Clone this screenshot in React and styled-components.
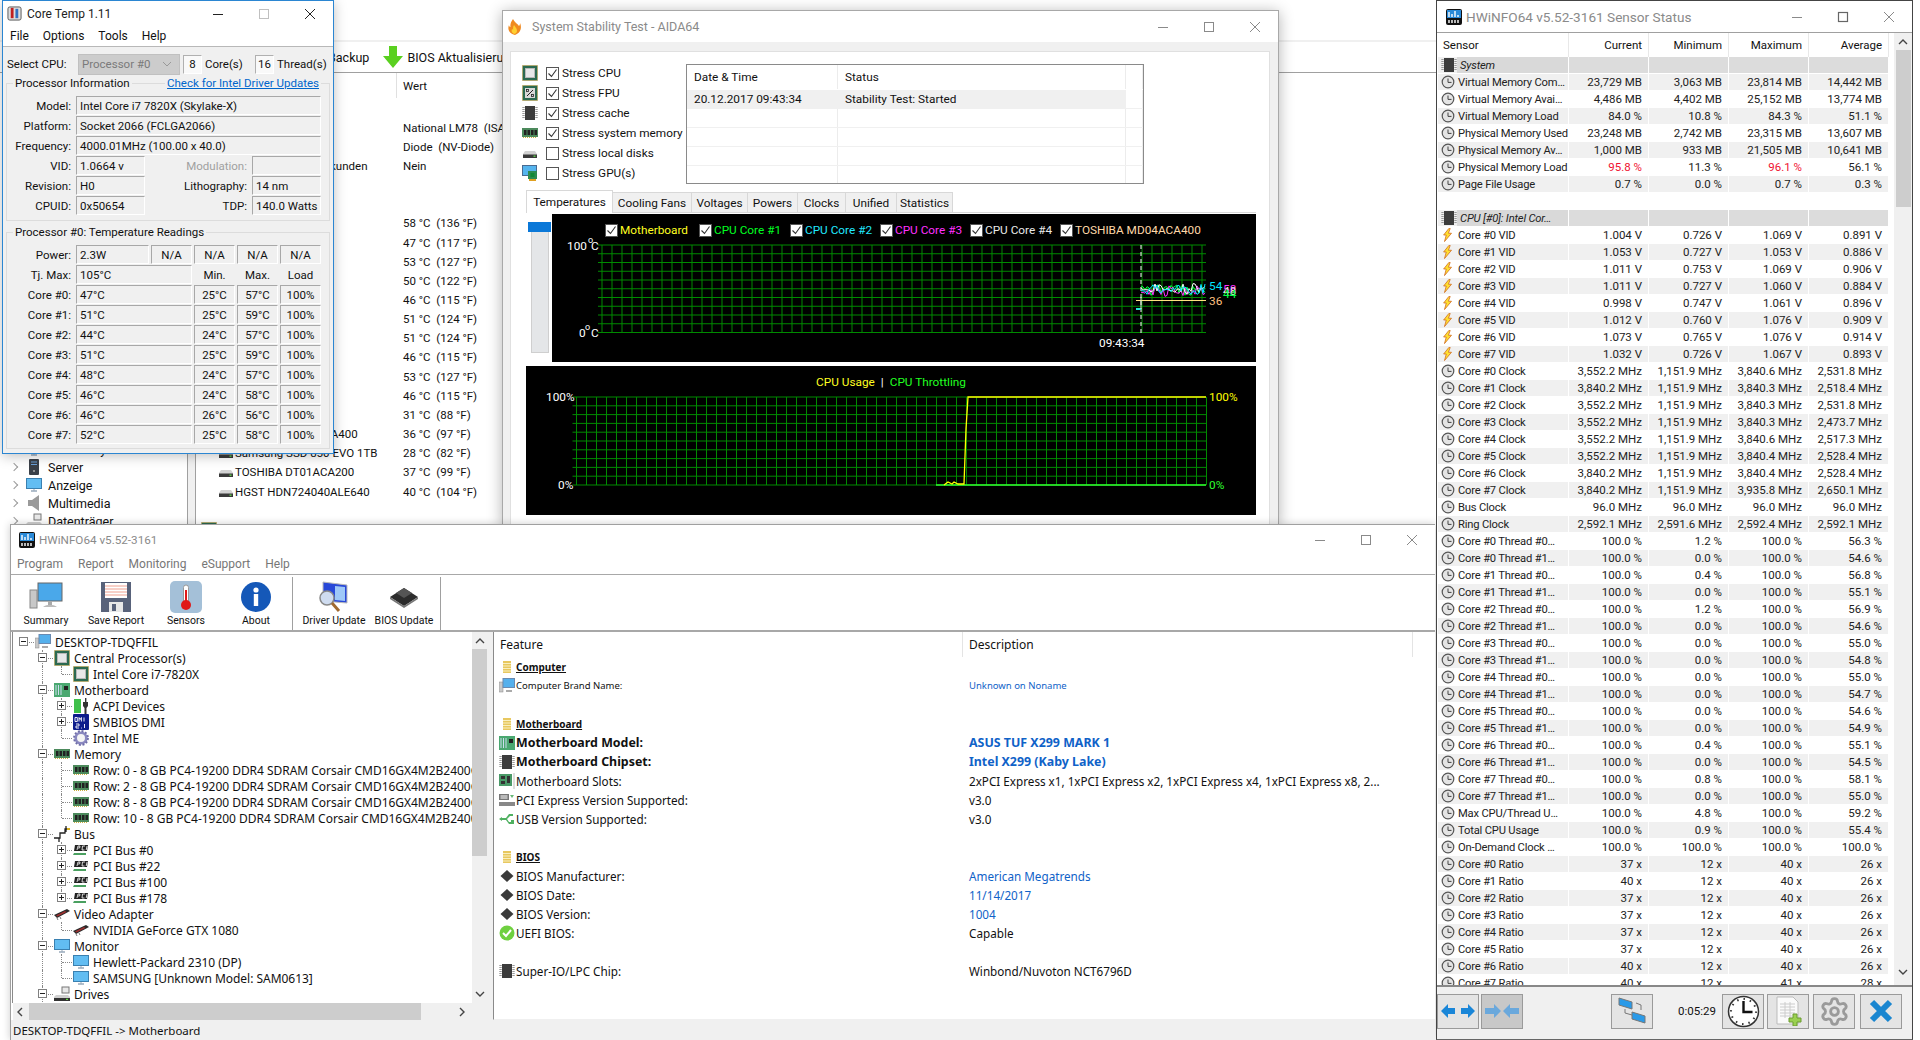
import React from 'react'
import styled, { createGlobalStyle } from 'styled-components'
import { Settings } from 'lucide-react'

const GlobalStyle = createGlobalStyle`
html, body { margin: 0; padding: 0; background: #fff; }
body { font-family: Roboto, "Noto Sans", "Liberation Sans", sans-serif; font-size: 12px; color: #111; }
* { box-sizing: border-box; }
`

const Desktop = styled.div`
position: relative;
width: 1920px;
height: 1040px;
overflow: hidden;
background: #fff;
`

const Win = styled.div`
position: absolute;
display: flex;
flex-direction: column;
background: #fff;
overflow: hidden;
`

const TitleBar = styled.div`
display: flex;
align-items: center;
flex: none;
height: ${p => p.$h}px;
padding-left: ${p => p.$pad}px;
gap: ${p => p.$gap || 6}px;
font-size: ${p => p.$size || 12}px;
background: #fff;
color: ${p => p.$active ? '#222' : '#8a8a8a'};
`

const TitleText = styled.span`
flex: 1;
white-space: nowrap;
`

const Controls = styled.div`
display: flex;
flex: none;
align-items: center;
`

const ControlBtn = styled.svg`
display: block;
width: 46px;
height: 12px;
`

function WinControls({ color = '#222', dim = '#222', maxw = 1 }) {
  return (
    <Controls>
      <ControlBtn viewBox="0 0 46 12"><path d="M18 6.5h10" stroke={color} fill="none" /></ControlBtn>
      <ControlBtn viewBox="0 0 46 12"><rect x="18.5" y="1.5" width="9" height="9" stroke={dim} fill="none" strokeWidth={maxw} /></ControlBtn>
      <ControlBtn viewBox="0 0 46 12"><path d="M18 1l10 10M28 1L18 11" stroke={color} fill="none" /></ControlBtn>
    </Controls>
  )
}

/* small icons */
const IcoSvg = styled.svg`
flex: none;
display: block;
`
const Ico = ({ s = 16, children, vb = '0 0 16 16' }) => (
  <IcoSvg width={s} height={s} viewBox={vb}>{children}</IcoSvg>
)
const CpuIcon = ({ s }) => (
  <Ico s={s}>
    <rect x="0.5" y="0.5" width="15" height="15" fill="#2c6a50" stroke="#c9a040" strokeDasharray="1 1" />
    <rect x="3.5" y="3.5" width="9" height="9" fill="#e8e8e8" stroke="#b8b8b8" />
  </Ico>
)
const FpuIcon = () => (
  <Ico>
    <rect x="0.5" y="0.5" width="15" height="15" fill="#2c6a50" stroke="#c9a040" strokeDasharray="1 1" />
    <rect x="3" y="3" width="10" height="10" fill="#d8d8d8" />
    <path d="M5 11l6-6" stroke="#222" />
    <rect x="4.5" y="4.5" width="2" height="2" fill="none" stroke="#222" strokeWidth=".8" />
    <rect x="9.5" y="9.5" width="2" height="2" fill="none" stroke="#222" strokeWidth=".8" />
  </Ico>
)
const ChipIcon = () => (
  <Ico>
    <rect x="3" y="1" width="10" height="14" fill="#3c3c3c" />
    <path d="M1.5 2v12M14.5 2v12" stroke="#999" strokeWidth="2.4" strokeDasharray="1 1" />
  </Ico>
)
const RamIcon = () => (
  <Ico>
    <rect x="0" y="3" width="16" height="9" fill="#4c8a5c" />
    <path d="M2 5h2.5v5H2zM5.5 5H8v5H5.5zM9 5h2.5v5H9zM12.5 5H15v5h-2.5z" fill="#222" />
    <path d="M1 12.5h14" stroke="#c9b040" strokeDasharray="1 1" />
  </Ico>
)
const DiskIcon = () => (
  <Ico>
    <path d="M3 6h10l2 3v3H1V9z" fill="#d2d2d2" />
    <rect x="1" y="9.5" width="14" height="3.5" fill="#3a3a3a" />
    <rect x="11.5" y="10.5" width="2" height="1.4" fill="#5ed04a" />
  </Ico>
)
const GpuMonitorIcon = () => (
  <Ico>
    <rect x="0.5" y="0.5" width="14" height="10" fill="#55b4ee" stroke="#4a6a90" />
    <rect x="6" y="6" width="9" height="8" fill="#2d8a50" />
    <rect x="8.5" y="8" width="4" height="4" fill="#183" />
    <rect x="7" y="14" width="7" height="2" fill="#e0a020" />
  </Ico>
)
const ClockIcon = () => (
  <Ico s={14} vb="0 0 14 14">
    <circle cx="7" cy="7" r="5.8" fill="#e4e4e4" stroke="#555" strokeWidth="1.2" />
    <path d="M7 3.5V7.4h3.5" stroke="#444" fill="none" />
  </Ico>
)
const BoltIcon = () => (
  <Ico s={14} vb="2 0 12 16">
    <path d="M9 0.5L3 8h3l-2 7.5L12 6H8.5l2-5.5z" fill="#ffe030" stroke="#d06a20" strokeWidth=".9" />
  </Ico>
)
const MonitorIcon = () => (
  <Ico>
    <rect x="0.5" y="1.5" width="15" height="10" fill="#62bdf2" stroke="#3a80b0" />
    <path d="M5 14h6" stroke="#9ab" strokeWidth="1.5" />
    <path d="M8 12v2" stroke="#9ab" />
  </Ico>
)
const PcIcon = () => (
  <Ico>
    <rect x="0" y="4" width="4" height="10" fill="#c8c8c8" stroke="#888" strokeWidth=".5" />
    <rect x="4" y="0.5" width="11.5" height="9" fill="#55b0ec" stroke="#6a8ab0" />
    <path d="M7 13h6" stroke="#aaa" strokeWidth="2" />
  </Ico>
)
const BoardIcon = () => (
  <Ico>
    <rect x="0" y="1" width="16" height="14" fill="#4aa870" />
    <path d="M2 3v10M4.5 3v10M7 3v10" stroke="#cde" />
    <rect x="10" y="4" width="4" height="4" fill="#222" />
  </Ico>
)
const AcpiIcon = () => (
  <Ico>
    <rect x="1" y="1" width="7" height="14" fill="#3fc04a" />
    <rect x="12" y="0" width="1.4" height="4" fill="#333" />
    <path d="M10 4h5v4l-1.5 2v6h-2v-6L10 8z" fill="#333" />
  </Ico>
)
const DmiIcon = () => (
  <Ico>
    <rect width="16" height="16" rx="1" fill="#0c1c8c" />
    <path d="M2 3.5h2.3v4H2zM6 7.5v-4l1.2 2 1.2-2v4M11 3.5v4" stroke="#fff" fill="none" strokeWidth=".9" />
    <path d="M3 10h3M6 10v2H3v2h3M8 14h.8M11.5 10v4" stroke="#fff" fill="none" strokeWidth=".9" />
  </Ico>
)
const GearIcon = () => (
  <Ico>
    <circle cx="8" cy="8" r="5.3" fill="#f4f4f4" stroke="#8a88c0" strokeWidth="2.6" />
    <circle cx="8" cy="8" r="7" fill="none" stroke="#6f6da8" strokeWidth="1.8" strokeDasharray="2 1.7" />
  </Ico>
)
const BusIcon = () => (
  <Ico>
    <path d="M0 12h6V7h5V3h4M5 12v4M12 0v6" stroke="#222" fill="none" strokeWidth="1.3" />
    <rect x="13" y="2" width="3" height="2" fill="#d8b020" />
  </Ico>
)
const PciIcon = () => (
  <Ico>
    <path d="M2 3h13l-1 6H1z" fill="#222" />
    <path d="M1 11h12v2H0z" fill="#4aa060" />
    <path d="M4 8l1-4h2l-.4 2H5M12 4H9.500L9 8h2.500M14 4l-.8 4" stroke="#fff" fill="none" strokeWidth=".8" />
  </Ico>
)
const GpuIcon = () => (
  <Ico>
    <path d="M0 9l13-6 3 2-13 7z" fill="#2a2a2a" />
    <path d="M2 9.500l9-4.500 1.500 1-9 4.500z" fill="#a03030" />
    <path d="M3 12l1 2M6 11l1 2" stroke="#777" />
  </Ico>
)
const DriveGroupIcon = () => (
  <Ico>
    <rect x="8" y="1" width="7" height="6" fill="#e8e8e8" stroke="#777" />
    <path d="M2 9h12l2 2v3H0v-3z" fill="#d0d0d0" />
    <rect x="0" y="12" width="16" height="3" fill="#333" />
    <rect x="12" y="12.800" width="2" height="1.200" fill="#6d4" />
  </Ico>
)
const ServerIcon = () => (
  <Ico>
    <rect x="3" y="0" width="10" height="16" rx="1" fill="#3a4048" />
    <path d="M5 3h6M5 5.500h6" stroke="#6aa0d8" />
    <circle cx="8" cy="12" r="1" fill="#aaa" />
  </Ico>
)
const SpeakerIcon = () => (
  <Ico><path d="M2 5h4l7-5v16l-7-5H2z" fill="#9a9a9a" /></Ico>
)
const NotesIcon = () => (
  <Ico s={14} vb="0 0 14 14">
    <rect x="3" y="1" width="8" height="12" fill="#e8c860" />
    <path d="M3 3.500h8M3 6h8M3 8.500h8M3 11h8" stroke="#f8f0c0" />
  </Ico>
)
const DiamondIcon = () => (
  <Ico s={14} vb="0 0 14 14"><path d="M7 1l6.500 6L7 13 .5 7z" fill="#3a3a3a" /></Ico>
)
const OkIcon = () => (
  <Ico>
    <circle cx="8" cy="8" r="7.500" fill="#6fd040" />
    <path d="M4 8l3 3 5-6" stroke="#fff" strokeWidth="2" fill="none" />
  </Ico>
)
const SlotsIcon = () => (
  <Ico>
    <rect x="0" y="1" width="13" height="12" fill="#4a9a68" />
    <path d="M2 3h4v3H2zM8 3h3v7H8zM2 8h4v3H2z" fill="#333" />
    <path d="M15 0v16" stroke="#bbb" />
  </Ico>
)
const PcieIcon = () => (
  <Ico>
    <rect x="0" y="2" width="10" height="6" fill="#777" />
    <path d="M1.500 4h7M1.500 6h7" stroke="#fff" />
    <rect x="0" y="10" width="16" height="4" fill="#888" />
    <path d="M11 3h4l-2 3z" fill="#6ab878" />
  </Ico>
)
const UsbIcon = () => (
  <Ico><path d="M0 8l3-2v1h4l3-4h4v2h-3L8 8l2 3h2V9h3v4h-5L7 9H3v1z" fill="#4fb060" /></Ico>
)
const FlameIcon = () => (
  <Ico>
    <path d="M7 0c1 3 5 5 6 7 1-1 1-2 1-3 2 4 1 10-5 12-5-1-8-5-6-10 0 1 .5 2 1.500 2C4 5 5 3 7 0z" fill="#f08a20" />
    <path d="M8 6c1 2 3 3 3 6 0 2-2 3-3 3-2-1-3-3-2-5 .5.500 1 .5 1.200.5C7 9 7 8 8 6z" fill="#ffd030" />
  </Ico>
)
const InfoAppIcon = () => (
  <Ico>
    <rect x="0" y="0" width="16" height="16" rx="2" fill="#111" />
    <rect x="1" y="1" width="14" height="8" fill="#2a8ad8" />
    <path d="M3 3v5M6 5v3M9 2v6M12 6v2" stroke="#fff" strokeWidth="1.400" />
    <path d="M3 11v3M6 11v3M9 11v3M12 11v3" stroke="#fff" strokeWidth="1.400" />
  </Ico>
)

/* window behind everything, only partly visible */
const BackWindow = styled(Win)`
left: 0;
top: 0;
width: 1436px;
height: 530px;
font-size: 12.5px;
`

const BackTitle = styled.div`
flex: none;
height: 42px;
border-bottom: 2px solid #f0f0f0;
`

const BackToolbar = styled.div`
flex: none;
display: flex;
align-items: center;
height: 31px;
padding-left: 328px;
gap: 13px;
white-space: nowrap;
border-bottom: 1px solid #a0a0a0;
`

const ToolText = styled.span`
margin-left: ${p => p.$ml || 0}px;
`

const BackBody = styled.div`
flex: 1;
display: flex;
min-height: 0;
`

const BackTree = styled.div`
flex: none;
width: 196px;
padding-top: 367px;
border-right: 1px solid #a0a0a0;
box-shadow: inset -7px 0 0 #f0f0f0, inset -8px 0 0 #a0a0a0;
`

const BackTreeRow = styled.div`
display: flex;
align-items: center;
height: 18px;
padding-left: 11px;
gap: 6px;
`

const Chevron = styled.span`
flex: none;
width: 6px;
height: 6px;
margin-right: 3px;
border-top: 1.5px solid #9a9a9a;
border-right: 1.5px solid #9a9a9a;
transform: rotate(45deg);
`

const BackList = styled.div`
flex: 1;
min-width: 0;
font-size: 11.5px;
`

const BackHead = styled.div`
display: flex;
align-items: center;
height: 25px;
padding-left: 200px;
margin-bottom: 20px;
`

const HeadSep = styled.span`
width: 1px;
height: 100%;
margin-right: 6px;
background: #e0e0e0;
`

const BackRow = styled.div`
display: flex;
align-items: center;
height: 19.17px;
white-space: pre;
`

const BackName = styled.div`
display: flex;
align-items: center;
gap: 1px;
flex: none;
width: 207px;
padding-left: ${p => p.$pad}px;
`

function BackWindowView() {
  const rows = [
    ['', 'National LM78  (ISA 290h)'],
    ['', 'Diode  (NV-Diode)'],
    ['Ausschalten in Sekunden', 'Nein', 43],
    ['', ''],
    ['', ''],
    ['', '58 °C  (136 °F)'],
    ['', '47 °C  (117 °F)'],
    ['', '53 °C  (127 °F)'],
    ['', '50 °C  (122 °F)'],
    ['', '46 °C  (115 °F)'],
    ['', '51 °C  (124 °F)'],
    ['', '51 °C  (124 °F)'],
    ['', '46 °C  (115 °F)'],
    ['', '53 °C  (127 °F)'],
    ['', '46 °C  (115 °F)'],
    ['', '31 °C  (88 °F)'],
    ['TOSHIBA MD04ACA400', '36 °C  (97 °F)', 22, true],
    ['Samsung SSD 850 EVO 1TB', '28 °C  (82 °F)', 22, true],
    ['TOSHIBA DT01ACA200', '37 °C  (99 °F)', 22, true],
    ['HGST HDN724040ALE640', '40 °C  (104 °F)', 22, true],
  ]
  return (
    <BackWindow>
      <BackTitle />
      <BackToolbar>
        <span>Backup</span>
        <Ico s={22} vb="0 0 22 22"><path d="M7 0h8v10h6L11 22 1 10h6z" fill="#5ad020" /></Ico>
        <ToolText $ml={-10}>BIOS Aktualisierung</ToolText>
      </BackToolbar>
      <BackBody>
        <BackTree>
          {[['Betriebssystem', <MonitorIcon key="a" />], ['Server', <ServerIcon key="b" />], ['Anzeige', <MonitorIcon key="c" />], ['Multimedia', <SpeakerIcon key="d" />], ['Datenträger', <DriveGroupIcon key="e" />]].map(([t, icon]) => (
            <BackTreeRow key={t}><Chevron />{icon}<span>{t}</span></BackTreeRow>
          ))}
        </BackTree>
        <BackList>
          <BackHead><HeadSep /><span>Wert</span></BackHead>
          {rows.map((r, i) => (
            <BackRow key={i}>
              <BackName $pad={r[2] || 0}>{r[3] && <DiskIcon />}{r[0]}</BackName>
              <span>{r[1]}</span>
            </BackRow>
          ))}
          <BackRow />
          <BackRow><BackName $pad={5}><CpuIcon />Kühlluft</BackName></BackRow>
        </BackList>
      </BackBody>
    </BackWindow>
  )
}

/* Core Temp */
const CoreWindow = styled(Win)`
left: 2px;
top: 0;
width: 332px;
height: 454px;
border: 1px solid #2b86d2;
box-shadow: 0 2px 12px rgba(0,0,0,.25);
font-size: 11.5px;
`

const MenuBar = styled.div`
display: flex;
flex: none;
align-items: center;
height: ${p => p.$h}px;
padding-left: ${p => p.$pad}px;
gap: ${p => p.$gap}px;
color: ${p => p.$color || '#111'};
background: #fff;
border-bottom: 1px solid ${p => p.$line || '#b8b8b8'};
font-size: 12px;
`

const CoreBody = styled.div`
flex: 1;
display: flex;
flex-direction: column;
padding: 6px 3px 0 3px;
background: #f0f0f0;
`

const SelectRow = styled.div`
display: flex;
align-items: center;
height: 22px;
padding-left: 1px;
margin-bottom: 8px;
white-space: nowrap;
`

const SelectLabel = styled.span`
flex: none;
width: ${p => p.$w}px;
`

const FakeSelect = styled.div`
display: flex;
align-items: center;
justify-content: space-between;
flex: none;
width: 102px;
height: 21px;
padding: 0 8px 0 3px;
background: #cccccc;
border: 1px solid #c0c0c0;
color: #7a7a7a;
`

const CountBox = styled.div`
display: flex;
align-items: center;
justify-content: center;
flex: none;
width: 19px;
height: 19px;
margin-left: ${p => p.$ml}px;
margin-right: 3px;
background: #f9f9f9;
border: 1px solid #b0b0b0;
border-right-color: #fff;
border-bottom-color: #fff;
`

const GroupBox = styled.div`
margin-bottom: ${p => p.$mb}px;
padding: 0 7px 0 0;
height: ${p => p.$h}px;
border: 1px solid #dcdcdc;
`

const GroupHead = styled.div`
display: flex;
justify-content: space-between;
align-items: center;
height: 16px;
margin: -9px 1px 5px 6px;
white-space: nowrap;
`

const GroupLabel = styled.span`
padding: 0 2px;
background: #f0f0f0;
`

const GroupLink = styled.a`
padding: 0 2px;
background: #f0f0f0;
color: #0066cc;
text-decoration: underline;
`

const InfoGrid = styled.div`
display: grid;
grid-template-columns: 64px 69px 97px 69px;
column-gap: 5px;
row-gap: 1px;
`

const TempGrid = styled.div`
display: grid;
grid-template-columns: 67px 73px 41px 41px 41px 41px;
column-gap: 2px;
row-gap: 1px;
`

const FieldLabel = styled.div`
display: flex;
align-items: center;
justify-content: flex-end;
height: 19px;
padding-right: ${p => p.$pr || 0}px;
white-space: nowrap;
color: ${p => p.$dim ? '#a0a0a0' : '#111'};
`

const Field = styled.div`
display: flex;
align-items: center;
justify-content: ${p => p.$center ? 'center' : 'flex-start'};
grid-column: span ${p => p.$span || 1};
height: 19px;
padding-left: ${p => p.$center ? 0 : 3}px;
background: #f0f0f0;
border: 1px solid;
border-color: #a8a8a8 #fff #fff #a8a8a8;
white-space: nowrap;
`

const Plain = styled.div`
display: flex;
align-items: center;
justify-content: center;
height: 19px;
`

function CoreTempView() {
  const cores = [
    ['47', '25', '57'], ['51', '25', '59'], ['44', '24', '57'], ['51', '25', '59'],
    ['48', '24', '57'], ['46', '24', '58'], ['46', '26', '56'], ['52', '25', '58'],
  ]
  return (
    <CoreWindow>
      <TitleBar $h={25} $pad={4} $gap={5} $active $size={12}>
        <Ico s={15}>
          <rect x="1" y="1" width="14" height="14" rx="2" fill="#ddd" stroke="#555" />
          <rect x="4" y="2" width="3" height="11" fill="#c02020" />
          <rect x="9" y="3" width="3" height="10" fill="#3070c0" />
        </Ico>
        <TitleText>Core Temp 1.11</TitleText>
        <WinControls color="#222" dim="#c0c0c0" />
      </TitleBar>
      <MenuBar $h={21} $pad={7} $gap={14}>
        <span>File</span><span>Options</span><span>Tools</span><span>Help</span>
      </MenuBar>
      <CoreBody>
        <SelectRow>
          <SelectLabel $w={71}>Select CPU:</SelectLabel>
          <FakeSelect>Processor #0<svg width="8" height="5" viewBox="0 0 8 5"><path d="M0 0l4 4 4-4" stroke="#999" fill="none" /></svg></FakeSelect>
          <CountBox $ml={3}>8</CountBox><SelectLabel $w={47}>Core(s)</SelectLabel>
          <CountBox $ml={3}>16</CountBox><span>Thread(s)</span>
        </SelectRow>
        <GroupBox $h={138} $mb={11}>
          <GroupHead><GroupLabel>Processor Information</GroupLabel><GroupLink>Check for Intel Driver Updates</GroupLink></GroupHead>
          <InfoGrid>
            <FieldLabel>Model:</FieldLabel><Field $span={3}>Intel Core i7 7820X (Skylake-X)</Field>
            <FieldLabel>Platform:</FieldLabel><Field $span={3}>Socket 2066 (FCLGA2066)</Field>
            <FieldLabel>Frequency:</FieldLabel><Field $span={3}>4000.01MHz (100.00 x 40.0)</Field>
            <FieldLabel>VID:</FieldLabel><Field>1.0664 v</Field><FieldLabel $dim>Modulation:</FieldLabel><Field />
            <FieldLabel>Revision:</FieldLabel><Field>H0</Field><FieldLabel>Lithography:</FieldLabel><Field>14 nm</Field>
            <FieldLabel>CPUID:</FieldLabel><Field>0x50654</Field><FieldLabel>TDP:</FieldLabel><Field>140.0 Watts</Field>
          </InfoGrid>
        </GroupBox>
        <GroupBox $h={217} $mb={0}>
          <GroupHead><GroupLabel>Processor #0: Temperature Readings</GroupLabel></GroupHead>
          <TempGrid>
            <FieldLabel $pr={3}>Power:</FieldLabel><Field>2.3W</Field><Field $center>N/A</Field><Field $center>N/A</Field><Field $center>N/A</Field><Field $center>N/A</Field>
            <FieldLabel $pr={3}>Tj. Max:</FieldLabel><Field $span={2}>105°C</Field><Plain>Min.</Plain><Plain>Max.</Plain><Plain>Load</Plain>
            {cores.map((c, i) => (
              <React.Fragment key={i}>
                <FieldLabel $pr={3}>Core #{i}:</FieldLabel>
                <Field $span={2}>{c[0]}°C</Field>
                <Field $center>{c[1]}°C</Field>
                <Field $center>{c[2]}°C</Field>
                <Field $center>100%</Field>
              </React.Fragment>
            ))}
          </TempGrid>
        </GroupBox>
      </CoreBody>
    </CoreWindow>
  )
}

/* AIDA64 stability test */
const StabilityWindow = styled(Win)`
left: 502px;
top: 10px;
width: 777px;
height: 516px;
border: 1px solid #a8a8a8;
box-shadow: 0 2px 14px rgba(0,0,0,.3);
font-size: 11.8px;
`

const StabilityBody = styled.div`
flex: 1;
padding: 9px 8px 0 7px;
background: #f0f0f0;
`

const StabilityPanel = styled.div`
height: 480px;
padding: 11px 14px 0 11px;
background: #fff;
border: 1px solid #e0e0e0;
`

const TopRow = styled.div`
display: flex;
height: 128px;
`

const StressList = styled.div`
flex: none;
width: 164px;
`

const StressRow = styled.div`
display: flex;
align-items: center;
height: 20px;
gap: 8px;
white-space: nowrap;
`

const Check = styled.span`
display: flex;
align-items: center;
justify-content: center;
flex: none;
width: 13px;
height: 13px;
margin-right: ${p => p.$mr ?? -5}px;
border: 1px solid #555;
background: #fff;
`

const CheckMark = ({ color = '#333' }) => (
  <svg width="11" height="11" viewBox="0 0 11 11"><path d="M1.500 5.500l3 3 5-7" stroke={color} strokeWidth="1.100" fill="none" /></svg>
)

const LogTable = styled.div`
width: 458px;
height: 120px;
margin-top: 1px;
border: 1px solid #8a8a8a;
overflow: hidden;
`

const LogRow = styled.div`
display: grid;
grid-template-columns: 151px 288px 1fr;
height: ${p => p.$head ? 25 : 19}px;
border-bottom: 1px solid ${p => p.$head ? 'transparent' : '#f0f0f0'};
`

const LogCell = styled.div`
display: flex;
align-items: center;
padding-left: 7px;
white-space: nowrap;
border-right: 1px solid ${p => p.$sel ? '#f0f0f0' : '#ececec'};
background: ${p => p.$sel ? '#f0f0f0' : 'transparent'};
`

const Tabs = styled.div`
display: flex;
align-items: flex-end;
height: 22px;
margin-left: 4px;
width: 730px;
border-bottom: 1px solid #d8d8d8;
`

const Tab = styled.div`
display: flex;
align-items: center;
justify-content: center;
flex: none;
width: ${p => p.$w}px;
height: ${p => p.$active ? 23 : 20}px;
margin-bottom: ${p => p.$active ? -1 : 0}px;
background: ${p => p.$active ? '#fff' : '#f0f0f0'};
border: 1px solid #d8d8d8;
border-left-width: ${p => p.$active ? 1 : 0}px;
border-bottom-width: 0;
white-space: nowrap;
`

const GraphRow = styled.div`
display: flex;
height: 148px;
margin: 1px 0 4px 4px;
width: 730px;
`

const TempScroll = styled.div`
position: relative;
flex: none;
width: 26px;
margin-top: 8px;
`

const ScrollTrack = styled.div`
width: 18px;
height: 131px;
margin-left: 5px;
background: #e4e6e8;
border: 1px solid #cfcfcf;
`

const ScrollMarker = styled.div`
position: absolute;
left: 2px;
top: 0;
width: 23px;
height: 10px;
background: #0a78d8;
`

const BlackPanel = styled.div`
flex: 1;
display: flex;
flex-direction: column;
background: #000;
color: #fff;
min-width: 0;
`

const Legend = styled.div`
display: flex;
align-items: center;
flex: none;
height: 22px;
margin: 5px 0 -4px 0;
padding-left: 53px;
`

const LegendItem = styled.div`
display: flex;
align-items: center;
flex: none;
gap: 2px;
width: ${p => p.$w}px;
color: ${p => p.$color};
white-space: nowrap;
`

const CpuPanel = styled(BlackPanel)`
width: 730px;
height: 149px;
margin-left: 4px;
flex: none;
`

const CpuLegend = styled.div`
display: flex;
justify-content: center;
align-items: center;
flex: none;
gap: 6px;
height: 22px;
margin: 5px 0 -4px 0;
white-space: nowrap;
`

const Tone = styled.span`
color: ${p => p.$color};
`

const ChartSvg = styled.svg`
display: block;
flex: none;
overflow: visible;
`

const ChartText = styled.text`
font-family: Roboto, sans-serif;
font-size: ${p => p.$size || 11.8}px;
fill: ${p => p.$fill || '#fff'};
`

function gridPath(x0, x1, dx, y0, y1, rows) {
  let d = ''
  for (let x = x0; x <= x1 + 0.5; x += dx) d += `M${x} ${y0}V${y1}`
  for (let i = 0; i <= rows; i++) {
    const y = y0 + (y1 - y0) * i / rows
    d += `M${x0 - 4} ${y}H${x1}`
  }
  return d
}

function trace(seed, base, amp) {
  let pts = []
  for (let x = 589; x <= 654; x += 2) {
    const n = Math.sin(x * 12.9898 + seed * 78.233) * 43758.5453
    pts.push(`${x},${(base + (n - Math.floor(n) - 0.5) * amp).toFixed(1)}`)
  }
  return pts.join(' ')
}

function TempChart() {
  return (
    <ChartSvg width="704" height="126" viewBox="0 0 704 126">
      <path d={gridPath(50, 654, 10, 8, 95.500, 10)} stroke="#008a00" fill="none" />
      <ChartText x="15" y="13">100</ChartText>
      <ChartText x="36" y="6" $size={9}>o</ChartText>
      <ChartText x="39" y="13">C</ChartText>
      <ChartText x="27" y="100">0</ChartText>
      <ChartText x="33" y="93" $size={9}>o</ChartText>
      <ChartText x="39" y="100">C</ChartText>
      <ChartText x="547" y="110">09:43:34</ChartText>
      <path d="M589 8V96" stroke="#fff" strokeDasharray="4 3" />
      <polyline points={trace(1, 53, 11)} stroke="#00ff40" fill="none" />
      <polyline points={trace(2, 54, 11)} stroke="#ff30ff" fill="none" />
      <polyline points={trace(3, 52, 11)} stroke="#ffffff" fill="none" />
      <polyline points={trace(4, 52, 11)} stroke="#00e8ff" fill="none" />
      <path d="M584 63.500H654" stroke="#ffe080" />
      <path d="M584 72H589" stroke="#20e8d8" strokeWidth="2" />
      <path d="M589 72V60" stroke="#d0f0d0" />
      <ChartText x="657" y="53" $fill="#00e8ff">54</ChartText>
      <ChartText x="671" y="56" $fill="#ff30ff">58</ChartText>
      <ChartText x="671" y="58" $fill="#e0e0e0">48</ChartText>
      <ChartText x="671" y="61" $fill="#00ff40">44</ChartText>
      <ChartText x="657" y="68" $fill="#ffc080">36</ChartText>
    </ChartSvg>
  )
}

function CpuChart() {
  return (
    <ChartSvg width="730" height="127" viewBox="0 0 730 127">
      <path d={gridPath(50.500, 680, 10, 8, 96, 10)} stroke="#008a00" fill="none" />
      <path d="M410 96H680" stroke="#30ff30" strokeWidth="1.500" />
      <path d="M418 96L422 93 426 95 428 93 432 95H438L440 40 442 8H680" stroke="#ffff00" fill="none" strokeWidth="1.300" />
      <ChartText x="20" y="12">100%</ChartText>
      <ChartText x="32" y="100">0%</ChartText>
      <ChartText x="683" y="12" $fill="#ffff00">100%</ChartText>
      <ChartText x="683" y="100" $fill="#30ff30">0%</ChartText>
    </ChartSvg>
  )
}

function StabilityView() {
  const stress = [
    [<CpuIcon key="1" />, 'Stress CPU', true],
    [<FpuIcon key="2" />, 'Stress FPU', true],
    [<ChipIcon key="3" />, 'Stress cache', true],
    [<RamIcon key="4" />, 'Stress system memory', true],
    [<DiskIcon key="5" />, 'Stress local disks', false],
    [<GpuMonitorIcon key="6" />, 'Stress GPU(s)', false],
  ]
  const tabs = [['Temperatures', 87, true], ['Cooling Fans', 79], ['Voltages', 56], ['Powers', 50], ['Clocks', 48], ['Unified', 51], ['Statistics', 56]]
  const legend = [['Motherboard', '#ffff20', 94], ['CPU Core #1', '#00ff20', 91], ['CPU Core #2', '#20e8ff', 90], ['CPU Core #3', '#ff30ff', 90], ['CPU Core #4', '#e8e8e8', 90], ['TOSHIBA MD04ACA400', '#ffd8a8', 140]]
  return (
    <StabilityWindow>
      <TitleBar $h={31} $pad={3} $gap={10} $size={12.5}>
        <FlameIcon />
        <TitleText>System Stability Test - AIDA64</TitleText>
        <WinControls color="#8a8a8a" dim="#8a8a8a" />
      </TitleBar>
      <StabilityBody>
        <StabilityPanel>
          <TopRow>
            <StressList>
              {stress.map(([icon, label, on]) => (
                <StressRow key={label}>{icon}<Check>{on && <CheckMark />}</Check><span>{label}</span></StressRow>
              ))}
            </StressList>
            <LogTable>
              <LogRow $head><LogCell>Date &amp; Time</LogCell><LogCell>Status</LogCell><LogCell /></LogRow>
              <LogRow><LogCell $sel>20.12.2017 09:43:34</LogCell><LogCell $sel>Stability Test: Started</LogCell><LogCell /></LogRow>
              <LogRow><LogCell /><LogCell /><LogCell /></LogRow>
              <LogRow><LogCell /><LogCell /><LogCell /></LogRow>
              <LogRow><LogCell /><LogCell /><LogCell /></LogRow>
              <LogRow><LogCell /><LogCell /><LogCell /></LogRow>
            </LogTable>
          </TopRow>
          <Tabs>
            {tabs.map(([t, w, a]) => <Tab key={t} $w={w} $active={a}>{t}</Tab>)}
          </Tabs>
          <GraphRow>
            <TempScroll><ScrollTrack /><ScrollMarker /></TempScroll>
            <BlackPanel>
              <Legend>
                {legend.map(([t, c, w]) => (
                  <LegendItem key={t} $w={w} $color={c}><Check $mr={0}><CheckMark /></Check>{t}</LegendItem>
                ))}
              </Legend>
              <TempChart />
            </BlackPanel>
          </GraphRow>
          <CpuPanel>
            <CpuLegend><Tone $color="#ffff20">CPU Usage</Tone><Tone $color="#fff">|</Tone><Tone $color="#20ff20">CPU Throttling</Tone></CpuLegend>
            <CpuChart />
          </CpuPanel>
        </StabilityPanel>
      </StabilityBody>
    </StabilityWindow>
  )
}

/* HWiNFO main window */
const InfoWindow = styled(Win)`
left: 10px;
top: 524px;
width: 1425px;
height: 516px;
border-top: 1px solid #a0a0a0;
border-left: 1px solid #a0a0a0;
box-shadow: 0 0 8px rgba(0,0,0,.2);
`

const Toolbar = styled.div`
display: flex;
flex: none;
height: 57px;
background: #fff;
border-bottom: 2px solid #a8a8a8;
`

const ToolButton = styled.div`
display: flex;
flex-direction: column;
align-items: center;
justify-content: flex-end;
flex: none;
width: 70px;
padding-bottom: 3px;
gap: 1px;
font-size: 10.5px;
white-space: nowrap;
`

const ToolSep = styled.div`
flex: none;
width: 1px;
margin: 2px ${p => p.$mr || 0}px 0 1px;
background: #a0a0a0;
`

const InfoBody = styled.div`
flex: 1;
display: flex;
min-height: 0;
`

const TreeColumn = styled.div`
flex: none;
display: flex;
flex-direction: column;
width: 476px;
padding-left: 1px;
`

const TreeMain = styled.div`
flex: 1;
display: flex;
min-height: 0;
border-left: 1px solid #8a8a8a;
`

const TreeList = styled.div`
flex: 1;
min-width: 0;
overflow: hidden;
padding-top: 2px;
font-family: "Noto Sans", sans-serif;
`

const TreeRowBox = styled.div`
position: relative;
display: flex;
align-items: center;
gap: 4px;
height: 16px;
padding-left: ${p => 22 + p.$d * 19}px;
font-size: 12px;
letter-spacing: -0.03px;
white-space: nowrap;
`

const Toggle = styled.span`
position: absolute;
left: ${p => p.$x}px;
top: 3px;
width: 9px;
height: 9px;
border: 1px solid #808080;
background: #fff;
z-index: 1;
&::before {
  content: '';
  position: absolute;
  left: 1px;
  top: 3px;
  width: 5px;
  height: 1px;
  background: #222;
}
&::after {
  content: '';
  display: ${p => p.$plus ? 'block' : 'none'};
  position: absolute;
  left: 3px;
  top: 1px;
  width: 1px;
  height: 5px;
  background: #222;
}
`

const GuideV = styled.span`
position: absolute;
left: ${p => p.$x}px;
top: 0;
height: ${p => p.$half ? 8 : 16}px;
border-left: 1px dotted #888;
`

const GuideH = styled.span`
position: absolute;
left: ${p => p.$x}px;
top: 8px;
width: ${p => p.$w}px;
border-top: 1px dotted #888;
`

const VScroll = styled.div`
flex: none;
display: flex;
flex-direction: column;
align-items: center;
width: ${p => p.$w}px;
background: #f0f0f0;
`

const ScrollArrow = styled.svg`
flex: none;
display: block;
width: 10px;
height: 6px;
margin: ${p => p.$m};
`

const VThumb = styled.div`
flex: none;
width: ${p => p.$w}px;
height: ${p => p.$h}px;
background: #cdcdcd;
`

const VSpace = styled.div`
flex: 1;
`

const HScroll = styled.div`
flex: none;
display: flex;
align-items: center;
height: 17px;
margin-left: 1px;
background: #f0f0f0;
`

const HThumb = styled.div`
flex: none;
width: 392px;
height: 100%;
margin: 0 34px 0 6px;
background: #cdcdcd;
`

const ArrowSvg = styled.svg`
flex: none;
margin-left: 4px;
`

const ArrowLR = ({ d }) => (
  <ArrowSvg width="6" height="10" viewBox="0 0 6 10"><path d={d} stroke="#444" strokeWidth="1.400" fill="none" /></ArrowSvg>
)

const Splitter = styled.div`
flex: none;
width: 6px;
background: #f0f0f0;
`

const DetailPane = styled.div`
flex: 1;
min-width: 0;
background: #fff;
border-left: 1px solid #8a8a8a;
border-bottom: 1px solid #f0f0f0;
font-family: "Noto Sans", sans-serif;
`

const DetailHead = styled.div`
display: grid;
grid-template-columns: 469px 450px 1fr;
height: 25px;
`

const DetailHeadCell = styled.div`
display: flex;
align-items: center;
padding-left: 6px;
border-right: 1px solid #e4e4e4;
`

const DetailRow = styled.div`
display: grid;
grid-template-columns: 470px 1fr;
height: 19px;
padding-left: 5px;
align-items: center;
white-space: nowrap;
font-size: ${p => p.$size}px;
font-weight: ${p => p.$bold ? 700 : 400};
`

const DetailName = styled.div`
display: flex;
align-items: center;
gap: 1px;
`

const NameText = styled.span`
text-decoration: ${p => p.$under ? 'underline' : 'none'};
`

const IconSlot = styled.span`
display: flex;
justify-content: center;
flex: none;
width: 16px;
`

const DetailValue = styled.div`
color: ${p => p.$blue ? '#0f62c8' : '#111'};
`

const StatusBar = styled.div`
flex: none;
display: flex;
align-items: center;
height: 20px;
padding-left: 2px;
background: #f0f0f0;
font-family: "Noto Sans", sans-serif;
font-size: 11.5px;
`

const Big = styled.div`
display: flex;
align-items: center;
justify-content: center;
height: 33px;
`

const PcBig = () => (
  <Ico s={34} vb="0 0 34 34">
    <rect x="1" y="10" width="7" height="18" fill="#c8c8c8" stroke="#888" />
    <rect x="9" y="3" width="24" height="18" fill="#4aa8ea" stroke="#666" />
    <path d="M14 27c4-3 10-3 14 0z" fill="#bbb" />
    <rect x="19" y="21" width="4" height="4" fill="#aaa" />
  </Ico>
)
const Floppy = () => (
  <Ico s={32} vb="0 0 32 32">
    <path d="M1 1h30v30H1z" fill="#58627a" />
    <rect x="5" y="2" width="22" height="15" fill="#fff" />
    <path d="M5 5h22M5 8h22M5 11h22M5 14h22" stroke="#f0a090" />
    <rect x="9" y="21" width="14" height="10" fill="#e8e8e8" />
    <rect x="12" y="23" width="4" height="7" fill="#58627a" />
  </Ico>
)
const Thermo = () => (
  <Ico s={32} vb="0 0 32 32">
    <rect width="32" height="32" rx="5" fill="#a4c0d8" />
    <rect x="13.500" y="4" width="5" height="19" rx="2.500" fill="#fff" stroke="#999" />
    <rect x="15" y="9" width="2" height="14" fill="#e01818" />
    <circle cx="16" cy="24" r="5" fill="#e01818" />
  </Ico>
)
const InfoBall = () => (
  <Ico s={30} vb="0 0 30 30">
    <circle cx="15" cy="15" r="15" fill="#1558b8" />
    <circle cx="15" cy="8" r="2.600" fill="#fff" />
    <rect x="12.800" y="12" width="4.400" height="12" fill="#fff" />
  </Ico>
)
const DriverBig = () => (
  <Ico s={33} vb="0 0 33 33">
    <path d="M5 2l24 3v18l-24-2z" fill="#2848d8" stroke="#bbb" />
    <path d="M17 6l10 1v14l-10-1z" fill="#9ec8f8" />
    <circle cx="9" cy="18" r="7" fill="#cfdcf0" stroke="#888" strokeWidth="1.500" />
    <path d="M14 23l7 8" stroke="#a06a30" strokeWidth="3" />
  </Ico>
)
const BiosBig = () => (
  <Ico s={30} vb="0 0 30 30">
    <path d="M15 6l14 9-14 9L1 15z" fill="#2c2c2c" />
    <path d="M15 6l8 5-8 5-8-5z" fill="#555" />
    <path d="M1 15v2l14 9 14-9v-2l-14 9z" fill="#777" />
  </Ico>
)

function InfoView() {
  const r = (d, text, icon, toggle, last) => ({ d, text, icon, toggle, last })
  const tree = [
    r(0, 'DESKTOP-TDQFFIL', <PcIcon />, '-'),
    r(1, 'Central Processor(s)', <CpuIcon />, '-'),
    r(2, 'Intel Core i7-7820X', <CpuIcon />, null, true),
    r(1, 'Motherboard', <BoardIcon />, '-'),
    r(2, 'ACPI Devices', <AcpiIcon />, '+'),
    r(2, 'SMBIOS DMI', <DmiIcon />, '+'),
    r(2, 'Intel ME', <GearIcon />, null, true),
    r(1, 'Memory', <RamIcon />, '-'),
    r(2, 'Row: 0 - 8 GB PC4-19200 DDR4 SDRAM Corsair CMD16GX4M2B2400C14', <RamIcon />),
    r(2, 'Row: 2 - 8 GB PC4-19200 DDR4 SDRAM Corsair CMD16GX4M2B2400C14', <RamIcon />),
    r(2, 'Row: 8 - 8 GB PC4-19200 DDR4 SDRAM Corsair CMD16GX4M2B2400C14', <RamIcon />),
    r(2, 'Row: 10 - 8 GB PC4-19200 DDR4 SDRAM Corsair CMD16GX4M2B2400C14', <RamIcon />, null, true),
    r(1, 'Bus', <BusIcon />, '-'),
    r(2, 'PCI Bus #0', <PciIcon />, '+'),
    r(2, 'PCI Bus #22', <PciIcon />, '+'),
    r(2, 'PCI Bus #100', <PciIcon />, '+'),
    r(2, 'PCI Bus #178', <PciIcon />, '+', true),
    r(1, 'Video Adapter', <GpuIcon />, '-'),
    r(2, 'NVIDIA GeForce GTX 1080', <GpuIcon />, null, true),
    r(1, 'Monitor', <MonitorIcon />, '-'),
    r(2, 'Hewlett-Packard 2310 (DP)', <MonitorIcon />),
    r(2, 'SAMSUNG [Unknown Model: SAM0613]', <MonitorIcon />, null, true),
    r(1, 'Drives', <DriveGroupIcon />, '-'),
  ]
  const details = [
    { name: 'Computer', icon: <NotesIcon />, size: 10, bold: true, under: true },
    { name: 'Computer Brand Name:', icon: <PcIcon />, value: 'Unknown on Noname', blue: true, size: 9.5 },
    {},
    { name: 'Motherboard', icon: <NotesIcon />, size: 10, bold: true, under: true },
    { name: 'Motherboard Model:', icon: <BoardIcon />, value: 'ASUS TUF X299 MARK 1', blue: true, size: 12.4, bold: true },
    { name: 'Motherboard Chipset:', icon: <ChipIcon />, value: 'Intel X299 (Kaby Lake)', blue: true, size: 12.4, bold: true },
    { name: 'Motherboard Slots:', icon: <SlotsIcon />, value: '2xPCI Express x1, 1xPCI Express x2, 1xPCI Express x4, 1xPCI Express x8, 2...', size: 11.7 },
    { name: 'PCI Express Version Supported:', icon: <PcieIcon />, value: 'v3.0', size: 11.7 },
    { name: 'USB Version Supported:', icon: <UsbIcon />, value: 'v3.0', size: 11.7 },
    {},
    { name: 'BIOS', icon: <NotesIcon />, size: 10, bold: true, under: true },
    { name: 'BIOS Manufacturer:', icon: <DiamondIcon />, value: 'American Megatrends', blue: true, size: 11.7 },
    { name: 'BIOS Date:', icon: <DiamondIcon />, value: '11/14/2017', blue: true, size: 11.7 },
    { name: 'BIOS Version:', icon: <DiamondIcon />, value: '1004', blue: true, size: 11.7 },
    { name: 'UEFI BIOS:', icon: <OkIcon />, value: 'Capable', size: 11.7 },
    {},
    { name: 'Super-IO/LPC Chip:', icon: <ChipIcon />, value: 'Winbond/Nuvoton NCT6796D', size: 11.7 },
  ]
  return (
    <InfoWindow>
      <TitleBar $h={29} $pad={8} $gap={4} $size={11.7}>
        <InfoAppIcon />
        <TitleText>HWiNFO64 v5.52-3161</TitleText>
        <WinControls color="#8a8a8a" dim="#8a8a8a" />
      </TitleBar>
      <MenuBar $h={21} $pad={6} $gap={15} $color="#777" $line="#a8a8a8">
        <span>Program</span><span>Report</span><span>Monitoring</span><span>eSupport</span><span>Help</span>
      </MenuBar>
      <Toolbar>
        <ToolButton><Big><PcBig /></Big>Summary</ToolButton>
        <ToolButton><Big><Floppy /></Big>Save Report</ToolButton>
        <ToolButton><Big><Thermo /></Big>Sensors</ToolButton>
        <ToolButton><Big><InfoBall /></Big>About</ToolButton>
        <ToolSep $mr={6} />
        <ToolButton><Big><DriverBig /></Big>Driver Update</ToolButton>
        <ToolButton><Big><BiosBig /></Big>BIOS Update</ToolButton>
        <ToolSep />
      </Toolbar>
      <InfoBody>
        <TreeColumn>
          <TreeMain>
            <TreeList>
              {tree.map((t, i) => (
                <TreeRowBox key={i} $d={t.d}>
                  {i > 0 && <GuideV $x={t.d === 0 ? 10 : 29} />}
                  {t.d === 2 && <GuideV $x={48} $half={t.last} />}
                  {t.d === 1 && <GuideH $x={30} $w={10} />}
                  {t.d === 2 && <GuideH $x={49} $w={10} />}
                  {t.d === 0 && <GuideH $x={11} $w={10} />}
                  {t.toggle && <Toggle $x={[6, 25, 44][t.d]} $plus={t.toggle === '+'} />}
                  {t.icon}
                  <span>{t.text}</span>
                </TreeRowBox>
              ))}
            </TreeList>
            <VScroll $w={15}>
              <ScrollArrow viewBox="0 0 10 6" $m="6px 0 5px"><path d="M1 5l4-4 4 4" stroke="#444" strokeWidth="1.400" fill="none" /></ScrollArrow>
              <VThumb $w={15} $h={207} />
              <VSpace />
              <ScrollArrow viewBox="0 0 10 6" $m="0 0 6px"><path d="M1 1l4 4 4-4" stroke="#444" strokeWidth="1.400" fill="none" /></ScrollArrow>
            </VScroll>
          </TreeMain>
          <HScroll>
            <ArrowLR d="M5 1L1 5l4 4" />
            <HThumb />
            <ArrowLR d="M1 1l4 4-4 4" />
          </HScroll>
        </TreeColumn>
        <Splitter />
        <DetailPane>
          <DetailHead>
            <DetailHeadCell>Feature</DetailHeadCell>
            <DetailHeadCell>Description</DetailHeadCell>
          </DetailHead>
          {details.map((d, i) => (
            <DetailRow key={i} $size={d.size || 12} $bold={d.bold}>
              {d.name ? <DetailName><IconSlot>{d.icon}</IconSlot><NameText $under={d.under}>{d.name}</NameText></DetailName> : <span />}
              <DetailValue $blue={d.blue}>{d.value}</DetailValue>
            </DetailRow>
          ))}
        </DetailPane>
      </InfoBody>
      <StatusBar>DESKTOP-TDQFFIL -&gt; Motherboard</StatusBar>
    </InfoWindow>
  )
}

/* HWiNFO sensors window */
const SensorWindow = styled(Win)`
left: 1436px;
top: 0;
width: 477px;
height: 1040px;
border: 1px solid #444;
border-bottom-color: #666;
font-size: 11.5px;
`

const SensorBody = styled.div`
flex: 1;
display: flex;
min-height: 0;
border-top: 1px solid #a0a0a0;
`

const SensorTable = styled.div`
flex: 1;
min-width: 0;
overflow: hidden;
`

const SensorHeadRow = styled.div`
display: grid;
grid-template-columns: 132px repeat(4, 80px);
height: 24px;
`

const SensorHeadCell = styled.div`
display: flex;
align-items: center;
justify-content: ${p => p.$left ? 'flex-start' : 'flex-end'};
padding: ${p => p.$left ? '0 0 0 6px' : '0 6px 0 0'};
border-right: 1px solid #e8e8e8;
`

const SensorRowBox = styled.div`
display: grid;
grid-template-columns: 132px repeat(4, 80px);
height: 17px;
`

const SensorCell = styled.div`
display: flex;
align-items: center;
justify-content: flex-end;
height: 16px;
padding-right: 6px;
margin-right: 1px;
white-space: nowrap;
color: ${p => p.$red ? '#f01030' : '#222'};
background: ${p => p.$bg};
`

const SensorNameCell = styled.div`
display: flex;
align-items: center;
gap: 3px;
height: 16px;
margin-left: 1px;
margin-right: 1px;
padding-left: 3px;
white-space: nowrap;
overflow: hidden;
font-size: 11.2px;
letter-spacing: -0.18px;
color: #222;
background: ${p => p.$bg};
`

const GroupName = styled.span`
flex: 1;
align-self: stretch;
display: flex;
align-items: center;
padding-left: 3px;
margin-left: -3px;
font-style: italic;
background: #d9d9d9;
`

const BottomBar = styled.div`
flex: none;
display: flex;
align-items: center;
height: 54px;
padding: 0 0 4px 0;
background: #f0f0f0;
border-top: 2px solid #888;
`

const ActionBtn = styled.div`
display: flex;
align-items: center;
justify-content: center;
flex: none;
width: 42px;
height: 35px;
margin-left: ${p => p.$ml || 0}px;
background: ${p => p.$on ? '#c8c8c8' : '#e4e4e4'};
border: 1px solid #9a9a9a;
color: #9a9a9a;
`

const Timer = styled.span`
flex: none;
width: 44px;
margin-left: 25px;
white-space: nowrap;
`

const clockRow = (n, a, b, c, d) => ({ n, v: [a, b, c, d], icon: 'clock' })
const vid = (n, a, b, c, d) => ({ n, v: [`${a} V`, `${b} V`, `${c} V`, `${d} V`], icon: 'bolt' })
const mhz = (n, a, b, c, d) => ({ n, v: [`${a} MHz`, `${b} MHz`, `${c} MHz`, `${d} MHz`], icon: 'clock' })

const threadData = [
  ['0 Thread #0', '1.2', '56.3'], ['0 Thread #1', '0.0', '54.6'], ['1 Thread #0', '0.4', '56.8'], ['1 Thread #1', '0.0', '55.1'],
  ['2 Thread #0', '1.2', '56.9'], ['2 Thread #1', '0.0', '54.6'], ['3 Thread #0', '0.0', '55.0'], ['3 Thread #1', '0.0', '54.8'],
  ['4 Thread #0', '0.0', '55.0'], ['4 Thread #1', '0.0', '54.7'], ['5 Thread #0', '0.0', '54.6'], ['5 Thread #1', '0.0', '54.9'],
  ['6 Thread #0', '0.4', '55.1'], ['6 Thread #1', '0.0', '54.5'], ['7 Thread #0', '0.8', '58.1'], ['7 Thread #1', '0.0', '55.0'],
]

const sensorRows = [
  { n: 'System', group: true },
  clockRow('Virtual Memory Com…', '23,729 MB', '3,063 MB', '23,814 MB', '14,442 MB'),
  clockRow('Virtual Memory Avai…', '4,486 MB', '4,402 MB', '25,152 MB', '13,774 MB'),
  clockRow('Virtual Memory Load', '84.0 %', '10.8 %', '84.3 %', '51.1 %'),
  clockRow('Physical Memory Used', '23,248 MB', '2,742 MB', '23,315 MB', '13,607 MB'),
  clockRow('Physical Memory Av…', '1,000 MB', '933 MB', '21,505 MB', '10,641 MB'),
  { ...clockRow('Physical Memory Load', '95.8 %', '11.3 %', '96.1 %', '56.1 %'), red: [0, 2] },
  clockRow('Page File Usage', '0.7 %', '0.0 %', '0.7 %', '0.3 %'),
  { n: '', blank: true },
  { n: 'CPU [#0]: Intel Cor…', group: true },
  vid('Core #0 VID', '1.004', '0.726', '1.069', '0.891'),
  vid('Core #1 VID', '1.053', '0.727', '1.053', '0.886'),
  vid('Core #2 VID', '1.011', '0.753', '1.069', '0.906'),
  vid('Core #3 VID', '1.011', '0.727', '1.060', '0.884'),
  vid('Core #4 VID', '0.998', '0.747', '1.061', '0.896'),
  vid('Core #5 VID', '1.012', '0.760', '1.076', '0.909'),
  vid('Core #6 VID', '1.073', '0.765', '1.076', '0.914'),
  vid('Core #7 VID', '1.032', '0.726', '1.067', '0.893'),
  mhz('Core #0 Clock', '3,552.2', '1,151.9', '3,840.6', '2,531.8'),
  mhz('Core #1 Clock', '3,840.2', '1,151.9', '3,840.3', '2,518.4'),
  mhz('Core #2 Clock', '3,552.2', '1,151.9', '3,840.3', '2,531.8'),
  mhz('Core #3 Clock', '3,552.2', '1,151.9', '3,840.3', '2,473.7'),
  mhz('Core #4 Clock', '3,552.2', '1,151.9', '3,840.6', '2,517.3'),
  mhz('Core #5 Clock', '3,552.2', '1,151.9', '3,840.4', '2,528.4'),
  mhz('Core #6 Clock', '3,840.2', '1,151.9', '3,840.4', '2,528.4'),
  mhz('Core #7 Clock', '3,840.2', '1,151.9', '3,935.8', '2,650.1'),
  mhz('Bus Clock', '96.0', '96.0', '96.0', '96.0'),
  mhz('Ring Clock', '2,592.1', '2,591.6', '2,592.4', '2,592.1'),
  ...threadData.map(([t, min, avg]) => clockRow(`Core #${t}…`, '100.0 %', `${min} %`, '100.0 %', `${avg} %`)),
  clockRow('Max CPU/Thread U…', '100.0 %', '4.8 %', '100.0 %', '59.2 %'),
  clockRow('Total CPU Usage', '100.0 %', '0.9 %', '100.0 %', '55.4 %'),
  clockRow('On-Demand Clock …', '100.0 %', '100.0 %', '100.0 %', '100.0 %'),
  clockRow('Core #0 Ratio', '37 x', '12 x', '40 x', '26 x'),
  clockRow('Core #1 Ratio', '40 x', '12 x', '40 x', '26 x'),
  clockRow('Core #2 Ratio', '37 x', '12 x', '40 x', '26 x'),
  clockRow('Core #3 Ratio', '37 x', '12 x', '40 x', '26 x'),
  clockRow('Core #4 Ratio', '37 x', '12 x', '40 x', '26 x'),
  clockRow('Core #5 Ratio', '37 x', '12 x', '40 x', '26 x'),
  clockRow('Core #6 Ratio', '40 x', '12 x', '40 x', '26 x'),
  clockRow('Core #7 Ratio', '40 x', '12 x', '41 x', '28 x'),
]

function SensorView() {
  return (
    <SensorWindow>
      <TitleBar $h={31} $pad={9} $gap={4} $size={13.6}>
        <InfoAppIcon />
        <TitleText>HWiNFO64 v5.52-3161 Sensor Status</TitleText>
        <WinControls color="#8a8a8a" dim="#666" maxw={1.2} />
      </TitleBar>
      <SensorBody>
        <SensorTable>
          <SensorHeadRow>
            <SensorHeadCell $left>Sensor</SensorHeadCell>
            <SensorHeadCell>Current</SensorHeadCell>
            <SensorHeadCell>Minimum</SensorHeadCell>
            <SensorHeadCell>Maximum</SensorHeadCell>
            <SensorHeadCell>Average</SensorHeadCell>
          </SensorHeadRow>
          {sensorRows.map((row, i) => {
            const bg = row.group ? '#dcdcdc' : i % 2 ? '#f0f0f0' : '#fff'
            return (
              <SensorRowBox key={i}>
                {row.group ? (
                  <SensorNameCell $bg="#f0f0f0"><ChipIcon /><GroupName>{row.n}</GroupName></SensorNameCell>
                ) : (
                  <SensorNameCell $bg={bg}>
                    {row.icon === 'clock' && <ClockIcon />}
                    {row.icon === 'bolt' && <BoltIcon />}
                    {row.n}
                  </SensorNameCell>
                )}
                {[0, 1, 2, 3].map(c => (
                  <SensorCell key={c} $bg={bg} $red={row.red && row.red.includes(c)}>{row.v && row.v[c]}</SensorCell>
                ))}
              </SensorRowBox>
            )
          })}
        </SensorTable>
        <VScroll $w={18}>
          <ScrollArrow viewBox="0 0 10 6" $m="6px 0 5px"><path d="M1 5l4-4 4 4" stroke="#444" strokeWidth="1.400" fill="none" /></ScrollArrow>
          <VThumb $w={15} $h={157} />
          <VSpace />
          <ScrollArrow viewBox="0 0 10 6" $m="0 0 10px"><path d="M1 1l4 4 4-4" stroke="#444" strokeWidth="1.400" fill="none" /></ScrollArrow>
        </VScroll>
      </SensorBody>
      <BottomBar>
        <ActionBtn>
          <svg width="34" height="18" viewBox="0 0 34 18">
            <path d="M0 9l7-7v4h7v6H7v4z" fill="#1a86d8" />
            <path d="M34 9l-7-7v4h-7v6h7v4z" fill="#1a86d8" />
          </svg>
        </ActionBtn>
        <ActionBtn $on $ml={2}>
          <svg width="34" height="18" viewBox="0 0 34 18">
            <path d="M16 9L9 2v4H0v6h9v4z" fill="#6aa8dc" />
            <path d="M18 9l7-7v4h9v6h-9v4z" fill="#6aa8dc" />
          </svg>
        </ActionBtn>
        <ActionBtn $ml={88}>
          <svg width="32" height="32" viewBox="0 0 32 32">
            <path d="M3 3l13 4v7L3 10z" fill="#2a9ae8" stroke="#777" />
            <path d="M16 17l13 4v7l-13-4z" fill="#2a9ae8" stroke="#777" />
            <path d="M9 14v4l7 2M20 8l5 2v5" stroke="#777" fill="none" />
          </svg>
        </ActionBtn>
        <Timer>0:05:29</Timer>
        <ActionBtn>
          <svg width="33" height="33" viewBox="0 0 33 33">
            <circle cx="16.500" cy="16.500" r="15" fill="#fff" stroke="#333" strokeWidth="1.500" />
            <circle cx="16.500" cy="16.500" r="12.500" fill="none" stroke="#333" strokeWidth="2" strokeDasharray="1.500 5" />
            <path d="M16.500 6v11h9" stroke="#111" strokeWidth="2.400" fill="none" />
          </svg>
        </ActionBtn>
        <ActionBtn $ml={3}>
          <svg width="30" height="30" viewBox="0 0 30 30">
            <path d="M4 1h16l5 5v22H4z" fill="#fafafa" stroke="#bbb" />
            <path d="M7 8h15M7 11h15M7 14h15M7 17h15M7 20h12M12 6v16M17 6v16" stroke="#ccc" />
            <path d="M20 18h4v4h4v4h-4v4h-4v-4h-4v-4h4z" fill="#9ad050" stroke="#6a9a30" />
          </svg>
        </ActionBtn>
        <ActionBtn $ml={4}><Settings size={31} strokeWidth={2.2} /></ActionBtn>
        <ActionBtn $ml={5}>
          <svg width="24" height="24" viewBox="0 0 24 24"><path d="M3 3l18 18M21 3L3 21" stroke="#1a86d0" strokeWidth="6" /></svg>
        </ActionBtn>
      </BottomBar>
    </SensorWindow>
  )
}

export default function App() {
  return (
    <Desktop>
      <GlobalStyle />
      <BackWindowView />
      <CoreTempView />
      <StabilityView />
      <InfoView />
      <SensorView />
    </Desktop>
  )
}
